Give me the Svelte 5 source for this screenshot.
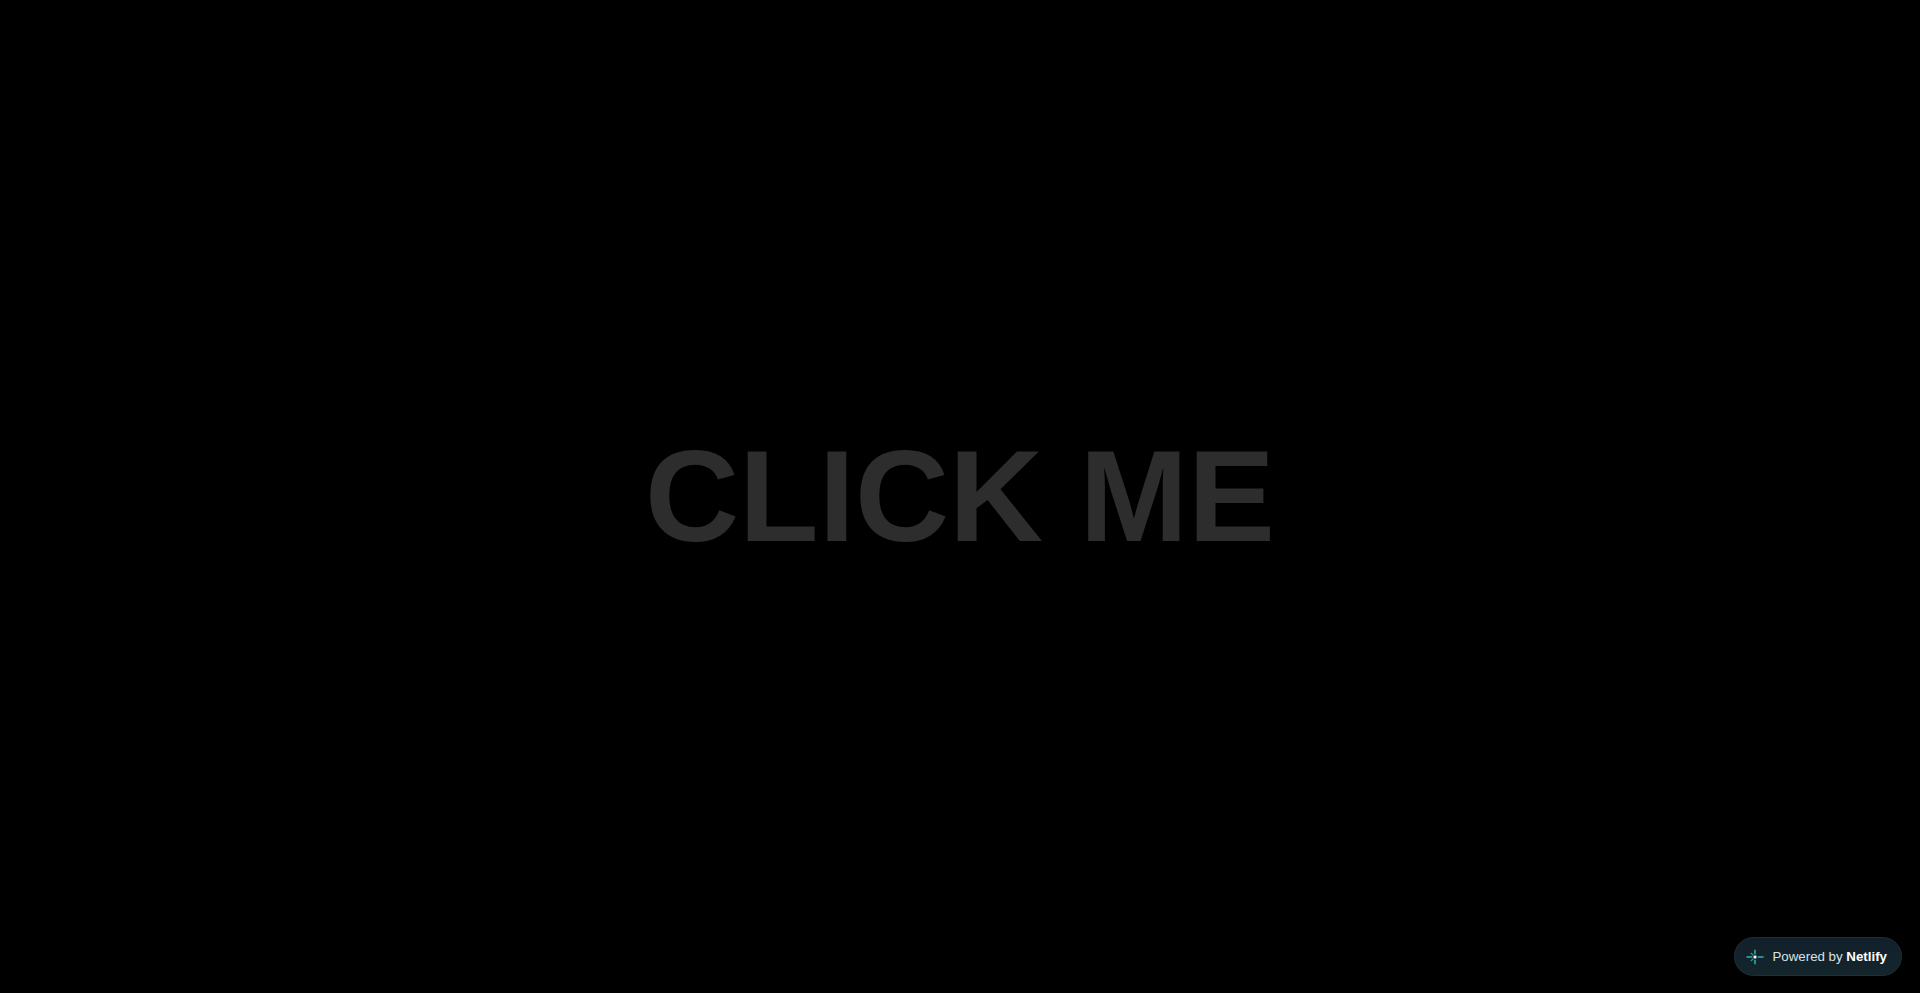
<script>
  let clicks = $state(0);
</script>

<main class="stage">
  <button class="headline" onclick={() => clicks++}>CLICK ME</button>

  <a class="badge" href="#top">
    <svg class="mark" viewBox="0 0 20 20" width="18" height="18" aria-hidden="true">
      <g stroke="#2a9d9a" stroke-width="2" fill="none">
        <path d="M0.5 10H7" />
        <path d="M13 10H19.5" />
        <path d="M10 2V7" />
        <path d="M10 13V18" />
        <path d="M5.5 5.5L8 8" stroke-width="1.4" />
        <path d="M5.5 14.5L8 12" stroke-width="1.4" />
      </g>
      <rect x="8.4" y="8.4" width="3.2" height="3.2" fill="#fff" />
    </svg>
    <span>Powered by <strong>Netlify</strong></span>
  </a>
</main>

<style>
  :global(body) {
    margin: 0;
    background: #000;
  }

  .stage {
    position: relative;
    height: 993px;
    display: flex;
    align-items: center;
    justify-content: center;
    overflow: hidden;
    background: #000;
  }

  .headline {
    padding: 0;
    border: none;
    background: transparent;
    color: #2d2d2d;
    font-family: "Liberation Sans", Arial, sans-serif;
    font-size: 130.4px;
    font-weight: 700;
    line-height: 1.2;
    cursor: pointer;
  }

  .badge {
    position: absolute;
    right: 18px;
    bottom: 17px;
    display: flex;
    align-items: center;
    gap: 8px;
    height: 39px;
    box-sizing: border-box;
    padding: 0 14px 0 11px;
    border: 1px solid #1e3037;
    border-radius: 20px;
    background: linear-gradient(#11202a, #15252c);
    color: #d8e2e6;
    font-family: "Liberation Sans", Arial, sans-serif;
    font-size: 13.3px;
    text-decoration: none;
    white-space: nowrap;
  }

  .badge strong {
    color: #fff;
    font-weight: 700;
  }

  .mark {
    flex: none;
  }
</style>
